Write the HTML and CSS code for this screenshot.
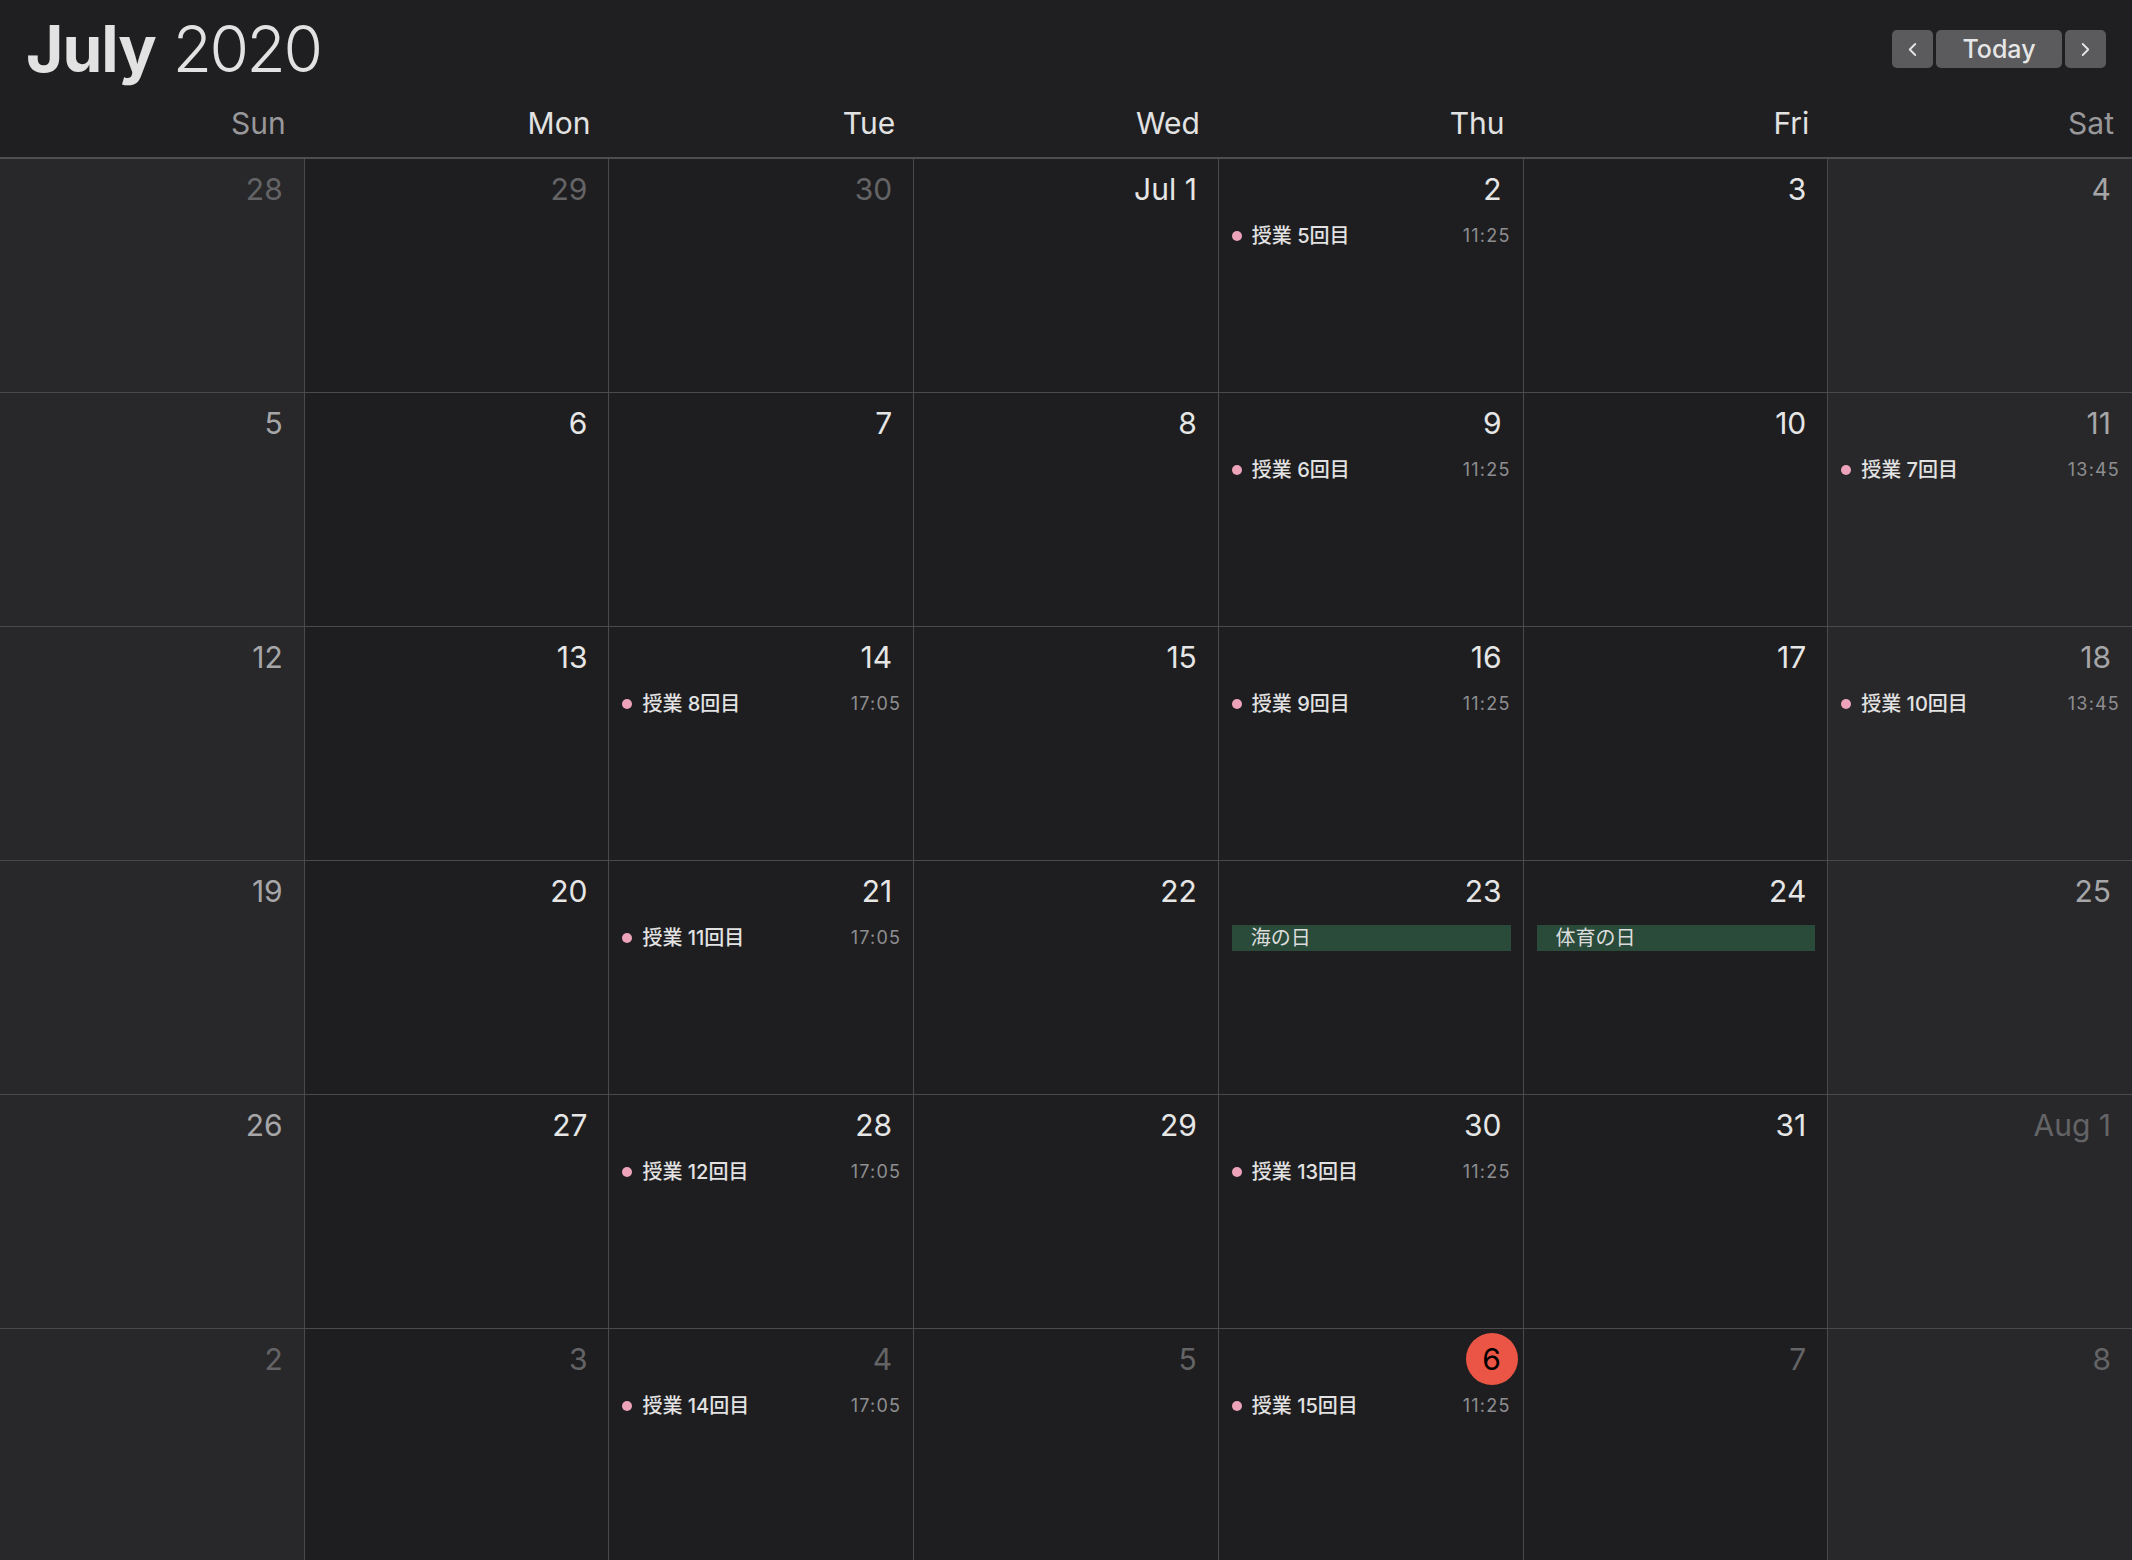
FILE: index.html
```html
<!DOCTYPE html>
<html lang="ja">
<head>
  <meta charset="UTF-8" />
  <title>Calendar - July 2020</title>
  <link rel="stylesheet" href="styles.css">
</head>
<body>
  <header class="topbar">
    <h1 class="title"><b>July</b> <span class="year">2020</span></h1>
    <div class="nav">
      <button class="arrow">
        <svg viewBox="0 0 12 16"><path d="M9 2 L3 8 L9 14"/></svg>
      </button>
      <button class="today-btn">Today</button>
      <button class="arrow">
        <svg viewBox="0 0 12 16"><path d="M3 2 L9 8 L3 14"/></svg>
      </button>
    </div>
  </header>

  <div class="weekdays">
    <div class="weekend">Sun</div>
    <div>Mon</div>
    <div>Tue</div>
    <div>Wed</div>
    <div>Thu</div>
    <div>Fri</div>
    <div class="weekend">Sat</div>
  </div>

  <section class="month">
    <!-- week 1 -->
    <div class="cell weekend other"><div class="num"><span>28</span></div></div>
    <div class="cell other"><div class="num"><span>29</span></div></div>
    <div class="cell other"><div class="num"><span>30</span></div></div>
    <div class="cell"><div class="num"><span>Jul 1</span></div></div>
    <div class="cell">
      <div class="num"><span>2</span></div>
      <div class="event"><i class="dot"></i><span class="name">授業 5回目</span><span class="time">11:25</span></div>
    </div>
    <div class="cell"><div class="num"><span>3</span></div></div>
    <div class="cell weekend"><div class="num"><span>4</span></div></div>

    <!-- week 2 -->
    <div class="cell weekend"><div class="num"><span>5</span></div></div>
    <div class="cell"><div class="num"><span>6</span></div></div>
    <div class="cell"><div class="num"><span>7</span></div></div>
    <div class="cell"><div class="num"><span>8</span></div></div>
    <div class="cell">
      <div class="num"><span>9</span></div>
      <div class="event"><i class="dot"></i><span class="name">授業 6回目</span><span class="time">11:25</span></div>
    </div>
    <div class="cell"><div class="num"><span>10</span></div></div>
    <div class="cell weekend">
      <div class="num"><span>11</span></div>
      <div class="event"><i class="dot"></i><span class="name">授業 7回目</span><span class="time">13:45</span></div>
    </div>

    <!-- week 3 -->
    <div class="cell weekend"><div class="num"><span>12</span></div></div>
    <div class="cell"><div class="num"><span>13</span></div></div>
    <div class="cell">
      <div class="num"><span>14</span></div>
      <div class="event"><i class="dot"></i><span class="name">授業 8回目</span><span class="time">17:05</span></div>
    </div>
    <div class="cell"><div class="num"><span>15</span></div></div>
    <div class="cell">
      <div class="num"><span>16</span></div>
      <div class="event"><i class="dot"></i><span class="name">授業 9回目</span><span class="time">11:25</span></div>
    </div>
    <div class="cell"><div class="num"><span>17</span></div></div>
    <div class="cell weekend">
      <div class="num"><span>18</span></div>
      <div class="event"><i class="dot"></i><span class="name">授業 10回目</span><span class="time">13:45</span></div>
    </div>

    <!-- week 4 -->
    <div class="cell weekend"><div class="num"><span>19</span></div></div>
    <div class="cell"><div class="num"><span>20</span></div></div>
    <div class="cell">
      <div class="num"><span>21</span></div>
      <div class="event"><i class="dot"></i><span class="name">授業 11回目</span><span class="time">17:05</span></div>
    </div>
    <div class="cell"><div class="num"><span>22</span></div></div>
    <div class="cell">
      <div class="num"><span>23</span></div>
      <div class="holiday">海の日</div>
    </div>
    <div class="cell">
      <div class="num"><span>24</span></div>
      <div class="holiday">体育の日</div>
    </div>
    <div class="cell weekend"><div class="num"><span>25</span></div></div>

    <!-- week 5 -->
    <div class="cell weekend"><div class="num"><span>26</span></div></div>
    <div class="cell"><div class="num"><span>27</span></div></div>
    <div class="cell">
      <div class="num"><span>28</span></div>
      <div class="event"><i class="dot"></i><span class="name">授業 12回目</span><span class="time">17:05</span></div>
    </div>
    <div class="cell"><div class="num"><span>29</span></div></div>
    <div class="cell">
      <div class="num"><span>30</span></div>
      <div class="event"><i class="dot"></i><span class="name">授業 13回目</span><span class="time">11:25</span></div>
    </div>
    <div class="cell"><div class="num"><span>31</span></div></div>
    <div class="cell weekend other"><div class="num"><span>Aug 1</span></div></div>

    <!-- week 6 -->
    <div class="cell weekend other"><div class="num"><span>2</span></div></div>
    <div class="cell other"><div class="num"><span>3</span></div></div>
    <div class="cell other">
      <div class="num"><span>4</span></div>
      <div class="event"><i class="dot"></i><span class="name">授業 14回目</span><span class="time">17:05</span></div>
    </div>
    <div class="cell other"><div class="num"><span>5</span></div></div>
    <div class="cell today">
      <div class="num"><span>6</span></div>
      <div class="event"><i class="dot"></i><span class="name">授業 15回目</span><span class="time">11:25</span></div>
    </div>
    <div class="cell other"><div class="num"><span>7</span></div></div>
    <div class="cell weekend other"><div class="num"><span>8</span></div></div>
  </section>
</body>
</html>
```

FILE: styles.css
```css
* { box-sizing: border-box; margin: 0; padding: 0; }

body {
  font-family: Inter, "Noto Sans CJK JP", sans-serif;
  background-color: #1f1f21;
  color: #e4e4e4;
  height: 100vh;
  overflow: hidden;
}

.topbar {
  display: flex;
  justify-content: space-between;
  align-items: flex-start;
  padding: 17px 26px 0 26px;
}

.title {
  font-size: 64px;
  line-height: 64px;
  font-weight: 400;
  color: #e2e2e2;
  letter-spacing: -1px;
}

.title b {
  font-weight: 700;
}

.title .year {
  font-weight: 300;
  letter-spacing: -2.5px;
}

.nav {
  display: flex;
  gap: 3px;
  margin-top: 13px;
}

.nav button {
  height: 38px;
  background-color: #5b5b5d;
  border: none;
  border-radius: 5px;
  color: #e6e6e6;
  font-family: Inter, sans-serif;
  font-size: 25px;
  font-weight: 500;
}

.nav .arrow {
  width: 41px;
  display: flex;
  align-items: center;
  justify-content: center;
}

.nav .arrow svg {
  width: 11px;
  height: 15px;
  fill: none;
  stroke: #e6e6e6;
  stroke-width: 2;
  stroke-linecap: round;
  stroke-linejoin: round;
}

.nav .today-btn {
  width: 126px;
}

.weekdays {
  display: grid;
  grid-template-columns: repeat(7, 1fr);
  column-gap: 1px;
  margin-top: 24px;
  padding-bottom: 16px;
  border-bottom: 2px solid #4e4e50;
}

.weekdays div {
  text-align: right;
  padding-right: 18px;
  font-size: 30px;
  line-height: 36px;
  color: #e2e2e2;
}

.weekdays .weekend {
  color: #98989a;
}

.month {
  display: grid;
  grid-template-columns: repeat(7, 1fr);
  grid-template-rows: repeat(6, 233px);
  gap: 1px;
  background-color: #4a4a4c;
}

.cell {
  background-color: #1e1e20;
  overflow: hidden;
}

.cell.weekend {
  background-color: #28282a;
}

.num {
  display: flex;
  justify-content: flex-end;
  padding: 4px 5px 0 0;
}

.num span {
  height: 52px;
  line-height: 52px;
  padding-right: 16px;
  font-size: 30px;
  color: #e6e6e6;
}

.cell.weekend .num span {
  color: #a6a6a8;
}

.cell.other .num span {
  color: #646466;
}

.cell.today .num span {
  width: 52px;
  padding: 0;
  text-align: center;
  background-color: #eb5545;
  border-radius: 50%;
  color: #000;
}

.event {
  display: flex;
  align-items: center;
  height: 24px;
  margin-top: 9px;
  padding: 0 12px 0 13px;
  font-size: 20px;
  line-height: 24px;
}

.dot {
  width: 10px;
  height: 10px;
  border-radius: 50%;
  background-color: #eda3ba;
  margin-right: 10px;
  flex-shrink: 0;
}

.event .name {
  flex: 1;
  color: #e2e2e2;
  font-weight: 500;
}

.event .time {
  color: #8e8e90;
  font-size: 18px;
  letter-spacing: 1.2px;
}

.holiday {
  margin: 8px 12px 0 13px;
  height: 26px;
  line-height: 26px;
  padding-left: 19px;
  background-color: #2a4a3a;
  font-size: 20px;
  color: #dcdcdc;
}
```
